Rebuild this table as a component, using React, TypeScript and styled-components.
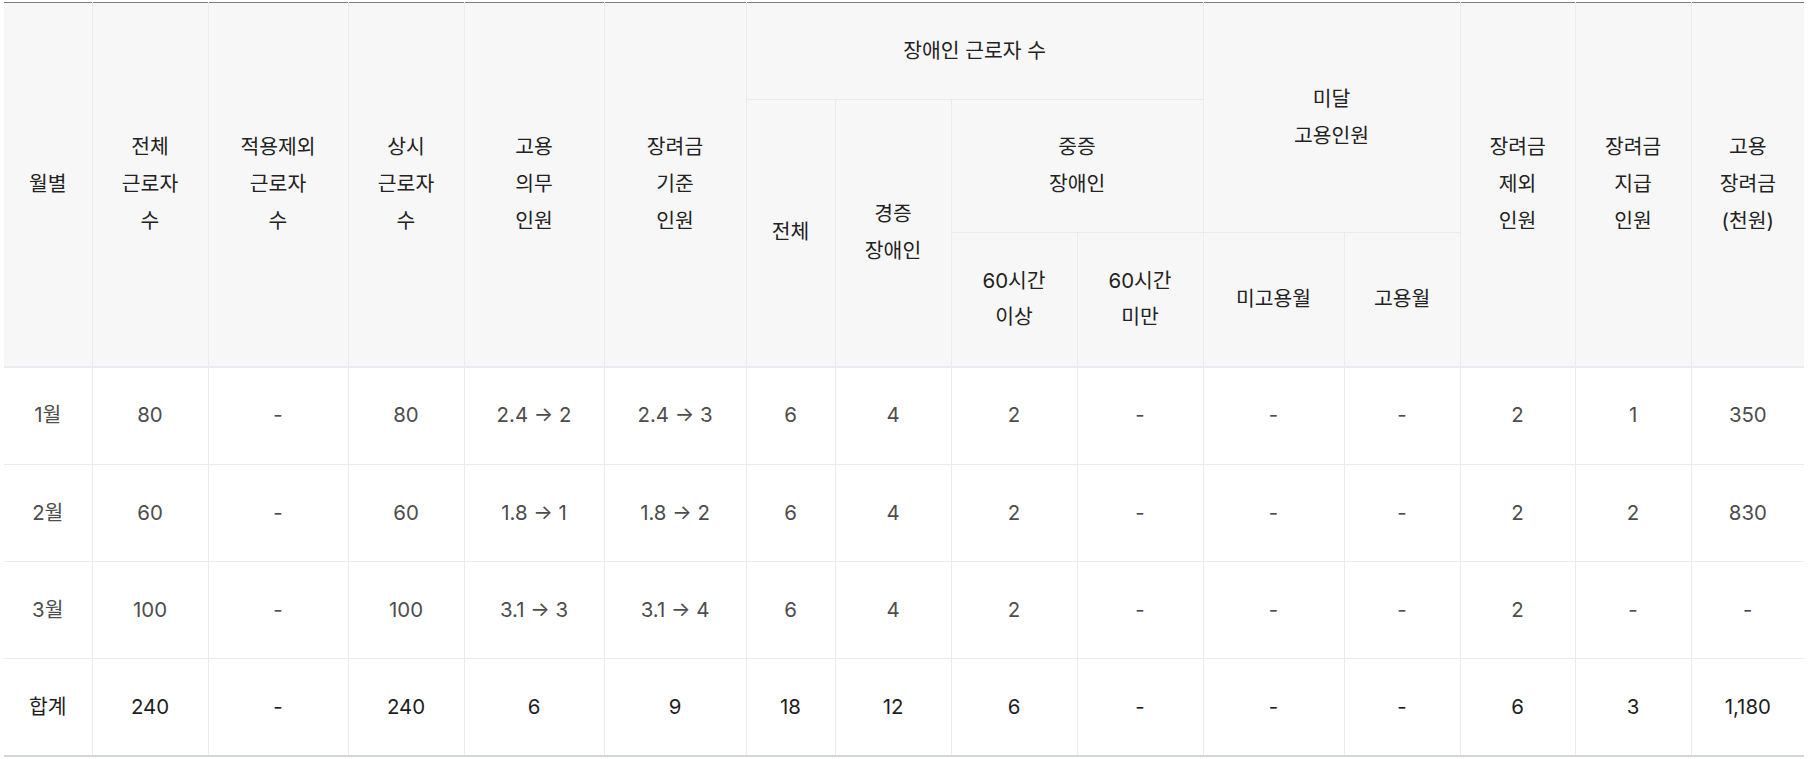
import styled, { createGlobalStyle } from 'styled-components';

const GlobalStyle = createGlobalStyle`
	html, body {
		margin: 0;
		padding: 0;
		background: #ffffff;
	}
	body {
		font-family: Inter, 'Noto Sans CJK KR', 'Noto Sans', sans-serif;
	}
`;

const COLS = [88, 116, 140, 116, 140, 142, 89, 116, 126, 126, 141, 116, 115, 116, 113];

type Row = { label: string; values: string[]; total?: boolean };

const ROWS: Row[] = [
	{ label: '1월', values: ['80', '-', '80', '2.4 → 2', '2.4 → 3', '6', '4', '2', '-', '-', '-', '2', '1', '350'] },
	{ label: '2월', values: ['60', '-', '60', '1.8 → 1', '1.8 → 2', '6', '4', '2', '-', '-', '-', '2', '2', '830'] },
	{ label: '3월', values: ['100', '-', '100', '3.1 → 3', '3.1 → 4', '6', '4', '2', '-', '-', '-', '2', '-', '-'] },
	{ label: '합계', values: ['240', '-', '240', '6', '9', '18', '12', '6', '-', '-', '-', '6', '3', '1,180'], total: true },
];

const Page = styled.div`
	padding: 2px 8px 0 4px;
`;

const Table = styled.table`
	width: 1800px;
	table-layout: fixed;
	border-collapse: collapse;
	border-top: 1px solid #767c8c;
	border-bottom: 2px solid #d3d7dc;
	font-size: 20.4px;
	line-height: 36.6px;
	text-align: center;
`;

const Head = styled.thead`
	background: #f7f7f7;
	border-bottom: 2px solid #e9ebee;
`;

const Th = styled.th`
	padding: 29.6px 4px;
	font-weight: 400;
	color: #222222;
	vertical-align: middle;
	border: 1px solid #ebebeb;
	border-top: none;

	&.first {
		border-left: none;
	}
	&.last {
		border-right: none;
	}
`;

const BodyRow = styled.tr<{ $total?: boolean }>`
	color: ${(p) => (p.$total ? '#1e1e1e' : '#4d4d4d')};
`;

const Td = styled.td`
	padding: 29.8px 4px;
	vertical-align: middle;
	border: 1px solid #ebebeb;

	&:first-child {
		border-left: none;
	}
	&:last-child {
		border-right: none;
	}
`;

export default function App() {
	return (
		<Page>
			<GlobalStyle />
			<Table>
				<colgroup>
					{COLS.map((w, i) => (
						<col key={i} style={{ width: w }} />
					))}
				</colgroup>
				<Head>
					<tr>
						<Th rowSpan={3} className='first'>월별</Th>
						<Th rowSpan={3}>전체<br />근로자<br />수</Th>
						<Th rowSpan={3}>적용제외<br />근로자<br />수</Th>
						<Th rowSpan={3}>상시<br />근로자<br />수</Th>
						<Th rowSpan={3}>고용<br />의무<br />인원</Th>
						<Th rowSpan={3}>장려금<br />기준<br />인원</Th>
						<Th colSpan={4}>장애인 근로자 수</Th>
						<Th colSpan={2} rowSpan={2}>미달<br />고용인원</Th>
						<Th rowSpan={3}>장려금<br />제외<br />인원</Th>
						<Th rowSpan={3}>장려금<br />지급<br />인원</Th>
						<Th rowSpan={3} className='last'>고용<br />장려금<br />(천원)</Th>
					</tr>
					<tr>
						<Th rowSpan={2}>전체</Th>
						<Th rowSpan={2}>경증<br />장애인</Th>
						<Th colSpan={2}>중증<br />장애인</Th>
					</tr>
					<tr>
						<Th>60시간<br />이상</Th>
						<Th>60시간<br />미만</Th>
						<Th>미고용월</Th>
						<Th>고용월</Th>
					</tr>
				</Head>
				<tbody>
					{ROWS.map((row) => (
						<BodyRow key={row.label} $total={row.total}>
							<Td>{row.label}</Td>
							{row.values.map((v, i) => (
								<Td key={i}>{v}</Td>
							))}
						</BodyRow>
					))}
				</tbody>
			</Table>
		</Page>
	);
}
